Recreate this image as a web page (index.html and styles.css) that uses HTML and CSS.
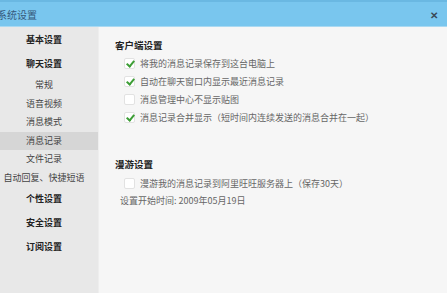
FILE: index.html
```html
<!DOCTYPE html>
<html lang="zh-CN">
<head>
  <meta charset="UTF-8" />
  <title>系统设置</title>
  <link rel="stylesheet" href="styles.css">
</head>
<body>
  <div class="titlebar">
    <span class="title">系统设置</span>
    <span class="close">&#x2715;</span>
  </div>
  <div class="window">
    <ul class="sidebar">
      <li class="group">基本设置</li>
      <li class="group">聊天设置</li>
      <li class="sub">常规</li>
      <li class="sub">语音视频</li>
      <li class="sub">消息模式</li>
      <li class="sub active">消息记录</li>
      <li class="sub">文件记录</li>
      <li class="sub">自动回复、快捷短语</li>
      <li class="group">个性设置</li>
      <li class="group">安全设置</li>
      <li class="group">订阅设置</li>
    </ul>
    <div class="main">
      <h3 class="section-title">客户端设置</h3>
      <label class="option"><span class="box checked"></span>将我的消息记录保存到这台电脑上</label>
      <label class="option"><span class="box checked"></span>自动在聊天窗口内显示最近消息记录</label>
      <label class="option"><span class="box"></span>消息管理中心不显示贴图</label>
      <label class="option"><span class="box checked"></span>消息记录合并显示（短时间内连续发送的消息合并在一起）</label>

      <h3 class="section-title roam">漫游设置</h3>
      <label class="option"><span class="box"></span>漫游我的消息记录到阿里旺旺服务器上（保存30天）</label>
      <p class="note">设置开始时间: 2009年05月19日</p>
    </div>
  </div>
</body>
</html>
```

FILE: styles.css
```css
* {
  box-sizing: border-box;
}

body {
  margin: 0;
  padding: 0;
  width: 447px;
  height: 293px;
  overflow: hidden;
  font-family: "Noto Sans CJK SC", "Noto Sans", sans-serif;
  font-size: 9px;
  color: #555;
  background-color: #f6f6f6;
}

.titlebar {
  height: 27px;
  display: flex;
  align-items: center;
  justify-content: space-between;
  background-color: #79c6ee;
  border-top: 2px solid #6ab8e2;
  border-bottom: 1px solid #a9d9f2;
}

.title {
  margin-left: -3px;
  font-size: 10px;
  color: #36587a;
}

.close {
  margin-right: 9px;
  font-size: 10px;
  font-weight: bold;
  color: #3a4a58;
}

.window {
  display: flex;
  height: 266px;
}

.sidebar {
  list-style: none;
  margin: 0;
  padding: 1px 0 0;
  width: 99px;
  background-color: #e8e8e8;
  border-right: 1px solid #eeeeee;
}

.sidebar li {
  text-align: center;
  padding-right: 10px;
  white-space: nowrap;
}

.group {
  height: 24px;
  line-height: 24px;
  font-weight: bold;
  color: #222;
}

.sub {
  height: 18.5px;
  line-height: 18.5px;
  color: #444;
}

.sub.active {
  background-color: #d6d6d6;
}

.main {
  flex: 1;
  padding-left: 16px;
}

.section-title {
  margin: 9px 0 0;
  height: 18px;
  line-height: 18px;
  font-size: 9.5px;
  font-weight: bold;
  color: #222;
}

.section-title.roam {
  margin-top: 29px;
  margin-bottom: 1px;
}

.option {
  display: flex;
  align-items: center;
  height: 18px;
  padding-left: 9px;
  color: #666;
}

.box {
  width: 11px;
  height: 11px;
  margin-right: 5px;
  background-color: #fff;
  border: 1px solid #e2e2e2;
  border-radius: 2px;
  position: relative;
}

.box.checked::after {
  content: "";
  position: absolute;
  left: 3px;
  top: 0px;
  width: 3px;
  height: 6px;
  border: solid #3d9e36;
  border-width: 0 2px 2px 0;
  transform: rotate(40deg);
}

.note {
  margin: 0;
  height: 18px;
  line-height: 18px;
  padding-left: 5px;
  color: #666;
}
```
